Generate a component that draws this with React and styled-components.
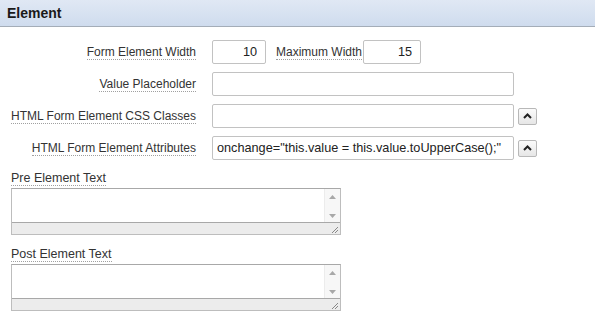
import styled, { createGlobalStyle } from "styled-components";

const GlobalStyle = createGlobalStyle`
  body {
    margin: 0;
    background: #fff;
    font-family: "Liberation Sans", Arial, sans-serif;
  }
`;

const App = () => {
  return (
    <Page>
      <GlobalStyle />
      <Header>Element</Header>
      <Form>
        <Row>
          <Label>Form Element Width</Label>
          <Field>
            <TextInput width={54} align="right" defaultValue="10" />
            <InlineLabel>Maximum Width</InlineLabel>
            <TextInput width={58} align="right" defaultValue="15" />
          </Field>
        </Row>
        <Row>
          <Label>Value Placeholder</Label>
          <Field>
            <TextInput width={302} />
          </Field>
        </Row>
        <Row>
          <Label>HTML Form Element CSS Classes</Label>
          <Field>
            <TextInput width={302} />
            <PickButton>
              <Chevron />
            </PickButton>
          </Field>
        </Row>
        <Row>
          <Label>HTML Form Element Attributes</Label>
          <Field>
            <TextInput
              width={302}
              defaultValue={'onchange="this.value = this.value.toUpperCase();"'}
            />
            <PickButton>
              <Chevron />
            </PickButton>
          </Field>
        </Row>
      </Form>
      <Stacked>
        <Block>
          <TopLabel>Pre Element Text</TopLabel>
          <TextArea />
        </Block>
        <Block>
          <TopLabel>Post Element Text</TopLabel>
          <TextArea />
        </Block>
      </Stacked>
    </Page>
  );
};

const Chevron = () => (
  <svg width="9" height="6" viewBox="0 0 9 6">
    <path d="M1 5 L4.5 1.5 L8 5" fill="none" stroke="#222" strokeWidth="2" />
  </svg>
);

const TextArea = () => (
  <AreaBox>
    <AreaBody>
      <AreaText />
      <ScrollBar>
        <svg width="7" height="4" viewBox="0 0 7 4">
          <path d="M0 4 L3.5 0 L7 4 Z" fill="#a8a8a8" />
        </svg>
        <svg width="7" height="4" viewBox="0 0 7 4">
          <path d="M0 0 L3.5 4 L7 0 Z" fill="#a8a8a8" />
        </svg>
      </ScrollBar>
    </AreaBody>
    <ResizeBar>
      <svg width="7" height="7" viewBox="0 0 7 7">
        <path d="M1 7 L7 1 M4 7 L7 4" stroke="#888" strokeWidth="1" />
      </svg>
    </ResizeBar>
  </AreaBox>
);

const Page = styled.div`
  width: 595px;
  height: 313px;
  overflow: hidden;
  color: #333;
  font-size: 12px;
`;

const Header = styled.div`
  height: 27px;
  box-sizing: border-box;
  padding: 5px 0 0 7px;
  background: linear-gradient(#e0e8f4, #cfdcee);
  border-bottom: 1px solid #a4adb8;
  font-size: 14px;
  font-weight: bold;
  color: #1a1a1a;
  line-height: 16px;
`;

const Form = styled.div`
  display: flex;
  flex-direction: column;
  gap: 8px;
  padding: 13px 0 0 11px;
`;

const Row = styled.div`
  display: grid;
  grid-template-columns: 185px 1fr;
  column-gap: 16px;
  align-items: center;
  height: 24px;
`;

const Label = styled.span`
  justify-self: end;
  line-height: 14px;
  border-bottom: 1px dotted #a0a0a0;
  color: #333;
`;

const InlineLabel = styled(Label)`
  margin: 0 1px 0 10px;
`;

const Field = styled.div`
  display: flex;
  align-items: center;
`;

const TextInput = styled.input`
  box-sizing: border-box;
  width: ${({ width }) => width}px;
  height: 24px;
  border: 1px solid #c2c2c2;
  border-radius: 2px;
  padding: 0 8px 0 4px;
  font-family: "Liberation Sans", Arial, sans-serif;
  font-size: 12.7px;
  color: #222;
  text-align: ${({ align }) => align || "left"};
  background: #fff;
  outline: none;
`;

const PickButton = styled.button`
  box-sizing: border-box;
  width: 19px;
  height: 17px;
  margin-left: 4px;
  padding: 0;
  display: flex;
  align-items: center;
  justify-content: center;
  border: 1px solid #b8b8b8;
  border-radius: 2px;
  background: linear-gradient(#fbfbfb, #e6e6e6);
`;

const Stacked = styled.div`
  display: flex;
  flex-direction: column;
  gap: 12px;
  padding: 11px 0 0 11px;
`;

const Block = styled.div`
  display: flex;
  flex-direction: column;
  align-items: flex-start;
  gap: 2px;
`;

const TopLabel = styled.span`
  line-height: 14px;
  font-size: 12.5px;
  border-bottom: 1px dotted #a0a0a0;
  color: #333;
`;

const AreaBox = styled.div`
  width: 330px;
  box-sizing: border-box;
  border: 1px solid #bdbdbd;
  border-top-color: #a8a8a8;
  display: flex;
  flex-direction: column;
`;

const AreaBody = styled.div`
  display: flex;
  height: 33px;
  background: #fff;
`;

const AreaText = styled.div`
  flex: 1;
`;

const ScrollBar = styled.div`
  width: 16px;
  background: #f7f7f7;
  border-left: 1px solid #ececec;
  display: flex;
  flex-direction: column;
  align-items: center;
  justify-content: space-between;
  padding: 6px 0 4px;
  box-sizing: border-box;
`;

const ResizeBar = styled.div`
  height: 10px;
  background: #ececec;
  border-top: 1px solid #a8a8a8;
  display: flex;
  justify-content: flex-end;
  align-items: flex-end;
  padding: 0 2px 1px 0;
`;

export default App;
